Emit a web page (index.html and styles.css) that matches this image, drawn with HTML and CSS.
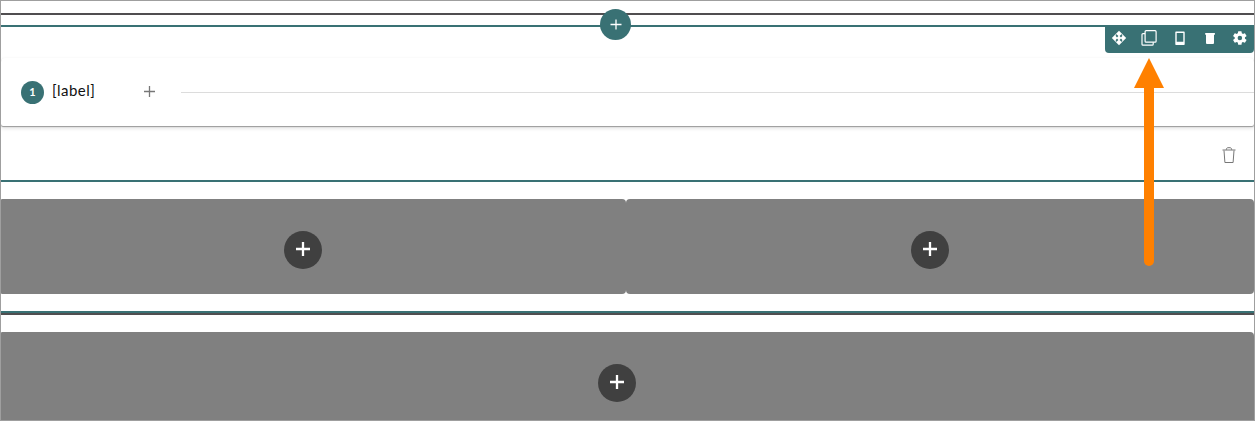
FILE: index.html
```html
<!DOCTYPE html>
<html lang="en">
<head>
<meta charset="utf-8">
<title>Layout editor</title>
<link rel="stylesheet" href="styles.css">
</head>
<body>
<main class="frame">
  <section class="section">
    <div class="row">
      <button class="add-row" aria-label="Add row"><svg width="12" height="12" viewBox="0 0 12 12"><path d="M6 .5v10M.5 5.500h11" stroke="#fff" stroke-width="1.300"/></svg></button>
      <div class="toolbar">
        <svg width="16" height="16" viewBox="0 0 16 16"><path fill="#fff" d="M8 .8L15.200 8 8 15.200.8 8z"/><path fill="#397174" d="M5.800 4.500l1.600 1.500L6 7.400 4.500 5.800zM10.200 4.500L8.600 6 10 7.400l1.500-1.600zM5.800 11.500L7.400 10 6 8.600l-1.500 1.600zM10.200 11.500L8.600 10 10 8.600l1.500 1.600z"/><path d="M4.600 3.800l.8.8M11.400 3.800l-.8.8M4.600 12.200l.8-.8M11.400 12.200l-.8-.8" stroke="#397174"/></svg>
        <svg width="16" height="16" viewBox="0 0 16 16" fill="none" stroke="#fff" stroke-width="1.200"><rect x="4.100" y=".7" width="11" height="11.500" rx="1"/><path d="M4 3.600H2a1 1 0 0 0-1 1v9.600a1 1 0 0 0 1 1h9.200a1 1 0 0 0 1-1v-2"/></svg>
        <svg width="16" height="16" viewBox="0 0 16 16"><path fill="#fff" fill-rule="evenodd" d="M4 1.500h8a.7.7 0 0 1 .7.7v12a.7.7 0 0 1-.7.7H4a.7.7 0 0 1-.7-.7v-12a.7.7 0 0 1 .7-.7zM4.700 3v8.800h6.600V3z"/></svg>
        <svg width="16" height="16" viewBox="0 0 16 16" fill="#fff"><path d="M3.200 2.900h9.700v1.900H3.200zM4 4.500h8v8.600a1 1 0 0 1-1 1H5a1 1 0 0 1-1-1z"/></svg>
        <svg width="16" height="16" viewBox="0 0 24 24" fill="#fff"><path d="M19.400 13a7.500 7.500 0 0 0 0-2l2.200-1.700a.5.500 0 0 0 .1-.6l-2.100-3.600a.5.500 0 0 0-.6-.2l-2.600 1a7.700 7.700 0 0 0-1.700-1l-.4-2.600a.5.500 0 0 0-.5-.5H9.700a.5.500 0 0 0-.5.500l-.4 2.600a7.700 7.700 0 0 0-1.700 1l-2.600-1a.5.500 0 0 0-.6.200L1.800 8.700a.5.500 0 0 0 .1.600L4.100 11a7.500 7.500 0 0 0 0 2l-2.200 1.700a.5.500 0 0 0-.1.600l2.100 3.600c.1.200.4.300.6.200l2.600-1c.5.400 1.100.700 1.700 1l.4 2.600c0 .300.200.500.500.500h4.100c.300 0 .500-.200.500-.500l.4-2.600a7.700 7.700 0 0 0 1.700-1l2.600 1c.2.100.5 0 .6-.2l2.100-3.600a.5.500 0 0 0-.1-.6zM11.800 15.400a3.400 3.400 0 1 1 0-6.800 3.400 3.400 0 0 1 0 6.800z"/></svg>
      </div>
      <div class="stepper">
        <span class="step-number">1</span>
        <span class="step-label">[label]</span>
        <svg class="add-step" width="13" height="13" viewBox="0 0 13 13"><path d="M6.500 1v11M1 6.500h11" stroke="#777" stroke-width="1.300"/></svg>
        <span class="step-line"></span>
      </div>
      <div class="row-footer">
        <svg width="14" height="16" viewBox="0 0 14 16" fill="none" stroke="#777"><path d="M.5 3h13M2 3.500l.9 12h8.200L12 3.500M4.300 2.800C4.300 1.400 5 .7 6 .7h2c1 0 1.700.7 1.700 2.100"/></svg>
      </div>
    </div>
    <div class="columns">
      <div class="cell cell-first"><button class="add" aria-label="Add content"><svg width="16" height="16" viewBox="0 0 16 16"><path d="M8 1v14M1 8h14" stroke="#fff" stroke-width="2.300"/></svg></button></div>
      <div class="cell"><button class="add" aria-label="Add content"><svg width="16" height="16" viewBox="0 0 16 16"><path d="M8 1v14M1 8h14" stroke="#fff" stroke-width="2.300"/></svg></button></div>
    </div>
  </section>
  <div class="cell cell-last"><button class="add" aria-label="Add content"><svg width="16" height="16" viewBox="0 0 16 16"><path d="M8 1v14M1 8h14" stroke="#fff" stroke-width="2.300"/></svg></button></div>
  <svg class="arrow" width="32" height="210" viewBox="0 0 32 210"><path d="M16 20v183" stroke="#ff8000" stroke-width="10" stroke-linecap="round"/><path d="M16 0l15 30H1z" fill="#ff8000"/></svg>
</main>
</body>
</html>
```
FILE: styles.css
```css
* { box-sizing: border-box; }
body { margin: 0; background: #fff; font-family: Lato, "Open Sans", sans-serif; }
svg { display: block; flex: none; }
button { border: 0; padding: 0; }
.frame {
  position: relative;
  height: 421px;
  padding-top: 12px;
  border: 1px solid #9f9f9f;
  overflow: hidden;
}
.section {
  padding-top: 10px;
  border-top: 2px solid #504e50;
  border-bottom: 2px solid #504e50;
}
.row {
  position: relative;
  height: 157px;
  padding-top: 31px;
  border-top: 2px solid #397174;
  border-bottom: 2px solid #397174;
}
.add-row {
  position: absolute;
  top: -18px;
  left: 599px;
  width: 31px;
  height: 31px;
  display: flex;
  align-items: center;
  justify-content: center;
  border-radius: 50%;
  background: #397174;
}
.toolbar {
  position: absolute;
  top: -2px;
  right: 0;
  width: 149px;
  height: 28px;
  padding: 0 6px 2px 6px;
  display: flex;
  align-items: center;
  justify-content: space-between;
  border-radius: 0 0 4px 4px;
  background: #397174;
}
.stepper {
  height: 68px;
  padding-left: 20px;
  display: flex;
  align-items: center;
  border-radius: 4px 4px 2px 2px;
  box-shadow: 0 1px 1px #999, 0 2px 4px rgba(0, 0, 0, .14);
}
.step-number {
  width: 23px;
  height: 23px;
  border-radius: 50%;
  background: #397174;
  color: #fff;
  font: 700 11px/22px Lato, sans-serif;
  text-align: center;
}
.step-label {
  width: 91px;
  margin-left: 8px;
  padding-bottom: 5px;
  color: #111;
  font-size: 15px;
  letter-spacing: .45px;
  line-height: 20px;
}
.add-step { margin-right: 25px; margin-bottom: 1px; }
.step-line { flex: 1; height: 1px; margin-top: 1px; background: #dcdcdc; }
.row-footer {
  height: 54px;
  padding: 4px 18px 0 0;
  display: flex;
  align-items: center;
  justify-content: flex-end;
}
.columns {
  display: grid;
  grid-template-columns: 625px 1fr;
  padding: 17px 0;
  border-bottom: 2px solid #397174;
}
.cell {
  height: 95px;
  padding: 32px 21px 0 0;
  border-radius: 4px;
  background: #808080;
}
.cell-first { border-radius: 1px 4px 4px 1px; }
.add {
  width: 38px;
  height: 38px;
  margin: 0 auto;
  padding-bottom: 3px;
  display: flex;
  align-items: center;
  justify-content: center;
  border-radius: 50%;
  background: #404040;
}
.cell-last { height: 88px; margin-top: 17px; padding-right: 22px; border-radius: 1px 4px 0 0; }
.arrow { position: absolute; left: 1132px; top: 57px; }
```
